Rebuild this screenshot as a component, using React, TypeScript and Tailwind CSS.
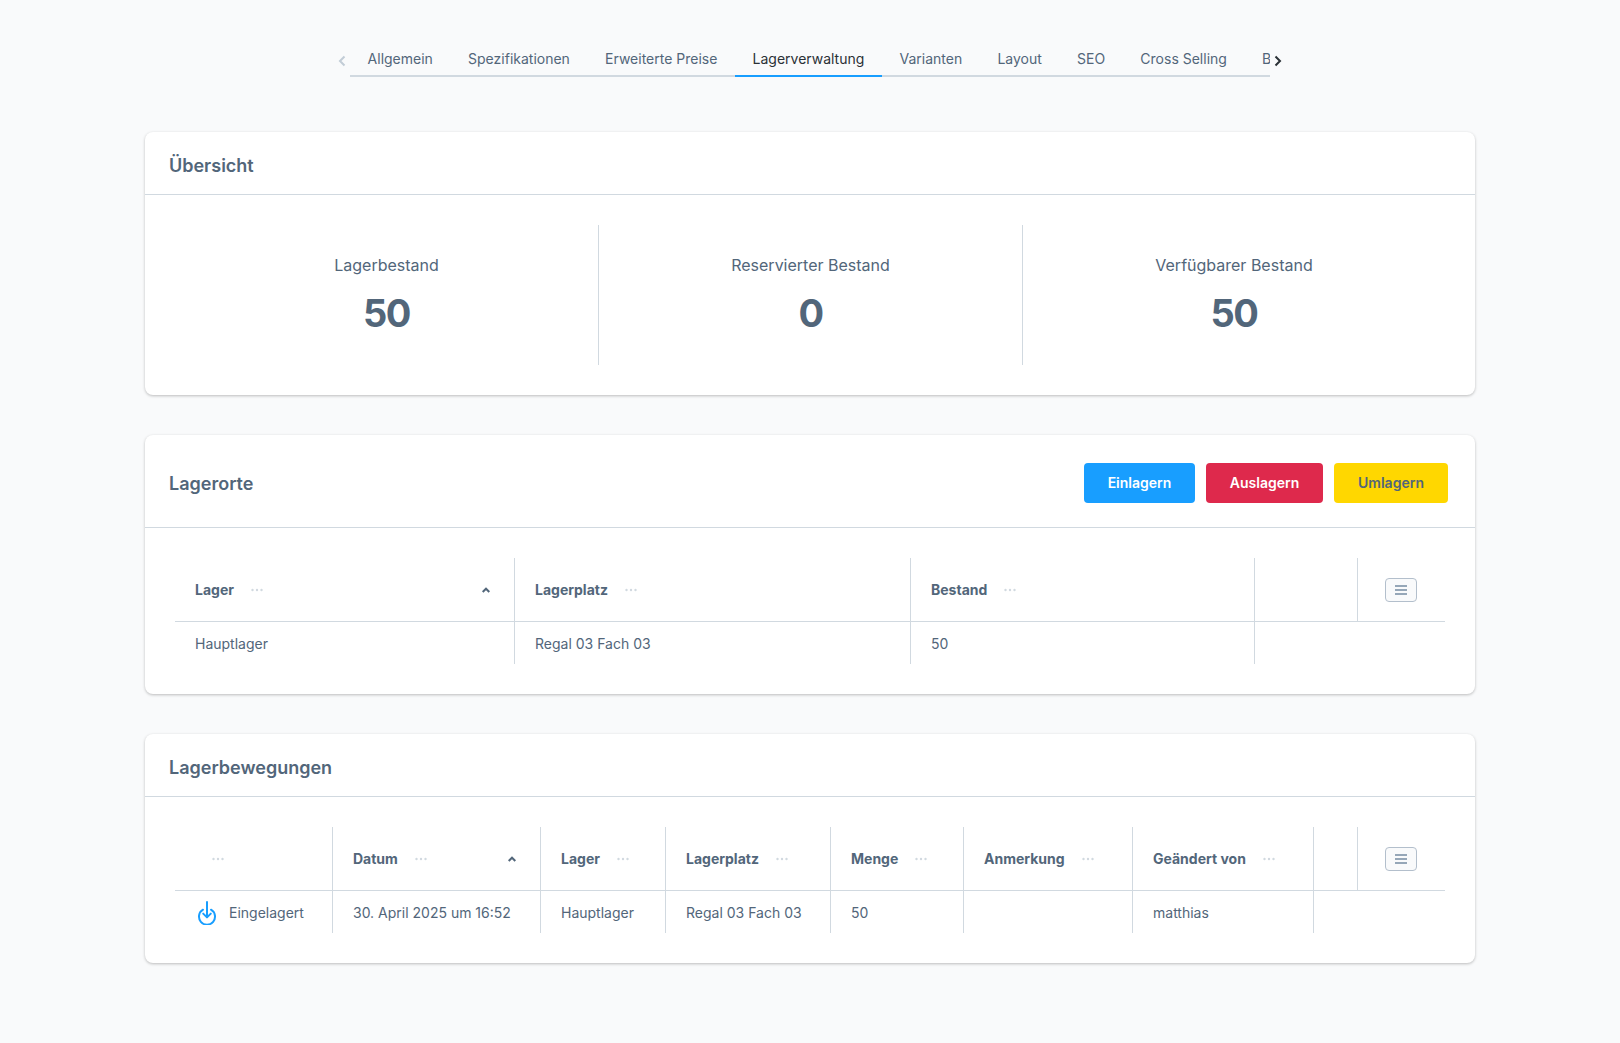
const tabs = ["Allgemein", "Spezifikationen", "Erweiterte Preise", "Lagerverwaltung", "Varianten", "Layout", "SEO", "Cross Selling", "Bewertungen"];

function Dots() {
  return (
    <svg className="ml-[17px] shrink-0" width="12" height="4" viewBox="0 0 12 4" fill="#d1d9e0">
      <circle cx="1.5" cy="2" r="1.2" />
      <circle cx="6" cy="2" r="1.2" />
      <circle cx="10.5" cy="2" r="1.2" />
    </svg>
  );
}

function SortUp() {
  return (
    <svg className="shrink-0" width="8" height="6" viewBox="0 0 8 6" fill="none" stroke="#52667a" strokeWidth="2">
      <path d="M0.7 5 L4 1.7 L7.3 5" />
    </svg>
  );
}

function MenuButton() {
  return (
    <div className="flex h-6 w-8 items-center justify-center rounded border border-[#b3bfcc] bg-[#f9fafb]">
      <svg width="12" height="10" viewBox="0 0 12 10" stroke="#758ca3" strokeWidth="1.5">
        <path d="M0 1 H12 M0 5 H12 M0 9 H12" />
      </svg>
    </div>
  );
}

function Head({ label, sort, last }: { label?: string; sort?: boolean; last?: boolean }) {
  return (
    <div className={`flex h-[63px] items-center px-5 pt-px text-sm font-bold text-[#52667a] ${last ? "" : "border-r border-[#d1d9e0]"}`}>
      {label}
      {label !== undefined && <Dots />}
      {sort && <span className="mr-1 ml-auto flex"><SortUp /></span>}
    </div>
  );
}

function Cell({ children, noBorder }: { children?: React.ReactNode; noBorder?: boolean }) {
  return (
    <div className={`flex h-[42px] items-center px-5 pt-px text-sm text-[#52667a] ${noBorder ? "" : "border-r border-[#d1d9e0]"}`}>
      {children}
    </div>
  );
}

function Card({ title, actions, children }: { title: string; actions?: React.ReactNode; children: React.ReactNode }) {
  return (
    <section className="w-[1330px] rounded-lg bg-white shadow-[0_1px_3px_rgba(0,0,0,0.25)]">
      <header className={`flex items-center justify-between border-b border-[#d1d9e0] pt-1 pl-6 pr-[27px] ${actions ? "h-[93px]" : "h-[63px]"}`}>
        <h2 className="mt-px text-lg font-semibold text-[#52667a]">{title}</h2>
        {actions}
      </header>
      <div className="p-[30px]">{children}</div>
    </section>
  );
}

function Stat({ label, value, border }: { label: string; value: string; border?: boolean }) {
  return (
    <div className={`flex h-[140px] flex-col items-center justify-center ${border ? "border-r border-[#d1d9e0]" : ""}`}>
      <div className="text-base leading-6 text-[#52667a]">{label}</div>
      <div className="mt-[12px] text-[38px] leading-[48px] font-bold tracking-[-1.5px] text-[#52667a]">{value}</div>
    </div>
  );
}

function StockIcon() {
  return (
    <svg className="ml-[2px] shrink-0" width="20" height="24" viewBox="0 0 20 24" fill="none" stroke="#189eff" strokeWidth="2">
      <path d="M6 8.7 A8 8 0 1 0 14 8.7" strokeLinecap="round" />
      <path d="M10 1 V16" strokeLinecap="round" />
      <path d="M6.2 12.6 L10 16.4 L13.8 12.6" strokeLinecap="round" strokeLinejoin="round" />
    </svg>
  );
}

export default function App() {
  return (
    <div className="flex min-h-[1043px] flex-col items-center bg-[#f9fafb] font-['Inter',sans-serif]">
      <nav className="mt-[41px] flex h-9 w-[960px] items-start">
        <svg className="mt-[14px] ml-[8px] shrink-0" width="8" height="12" viewBox="0 0 8 12" fill="none" stroke="#c2ccd6" strokeWidth="2">
          <path d="M6.5 1.5 L2 6 L6.5 10.5" />
        </svg>
        <div className="ml-[4px] flex h-9 w-[920px] overflow-hidden shadow-[inset_0_-2px_0_#d1d9e0]">
          {tabs.map((t, i) => (
            <div
              key={t}
              className={`flex h-9 shrink-0 items-center border-b-2 px-[17.6px] pt-[2px] text-sm ${i === 3 ? "border-[#189eff] text-[#2b3136]" : "border-transparent text-[#52667a]"}`}
            >
              {t}
            </div>
          ))}
        </div>
        <svg className="mt-[14px] ml-[4px] shrink-0" width="8" height="12" viewBox="0 0 8 12" fill="none" stroke="#2b3136" strokeWidth="2">
          <path d="M1.5 1.5 L6 6 L1.5 10.5" />
        </svg>
      </nav>

      <main className="mt-[55px] flex flex-col gap-10">
        <Card title="Übersicht">
          <div className="grid grid-cols-[424px_424px_422px]">
            <Stat label="Lagerbestand" value="50" border />
            <Stat label="Reservierter Bestand" value="0" border />
            <Stat label="Verfügbarer Bestand" value="50" />
          </div>
        </Card>

        <Card
          title="Lagerorte"
          actions={
            <div className="flex gap-[11px]">
              <button className="h-10 w-[111px] rounded bg-[#189eff] text-sm font-semibold text-white">Einlagern</button>
              <button className="h-10 w-[117px] rounded bg-[#de294c] text-sm font-semibold text-white">Auslagern</button>
              <button className="h-10 w-[114px] rounded bg-[#ffd700] text-sm font-semibold text-[#52667a]">Umlagern</button>
            </div>
          }
        >
          <div className="grid grid-cols-[340px_396px_344px_103px_87px]">
            <Head label="Lager" sort />
            <Head label="Lagerplatz" />
            <Head label="Bestand" />
            <Head />
            <div className="flex h-[63px] items-center justify-center pt-px pr-px"><MenuButton /></div>
            <div className="col-span-5 h-px bg-[#d1d9e0]" />
            <Cell>Hauptlager</Cell>
            <Cell>Regal 03 Fach 03</Cell>
            <Cell>50</Cell>
            <Cell noBorder />
            <div />
          </div>
        </Card>

        <Card title="Lagerbewegungen">
          <div className="grid grid-cols-[158px_208px_125px_165px_133px_169px_181px_44px_87px]">
            <Head label="" />
            <Head label="Datum" sort />
            <Head label="Lager" />
            <Head label="Lagerplatz" />
            <Head label="Menge" />
            <Head label="Anmerkung" />
            <Head label="Geändert von" />
            <Head />
            <div className="flex h-[63px] items-center justify-center pt-px pr-px"><MenuButton /></div>
            <div className="col-span-9 h-px bg-[#d1d9e0]" />
            <Cell>
              <StockIcon />
              <span className="ml-[12px]">Eingelagert</span>
            </Cell>
            <Cell>30. April 2025 um 16:52</Cell>
            <Cell>Hauptlager</Cell>
            <Cell>Regal 03 Fach 03</Cell>
            <Cell>50</Cell>
            <Cell />
            <Cell>matthias</Cell>
            <Cell noBorder />
            <div />
          </div>
        </Card>
      </main>
    </div>
  );
}
